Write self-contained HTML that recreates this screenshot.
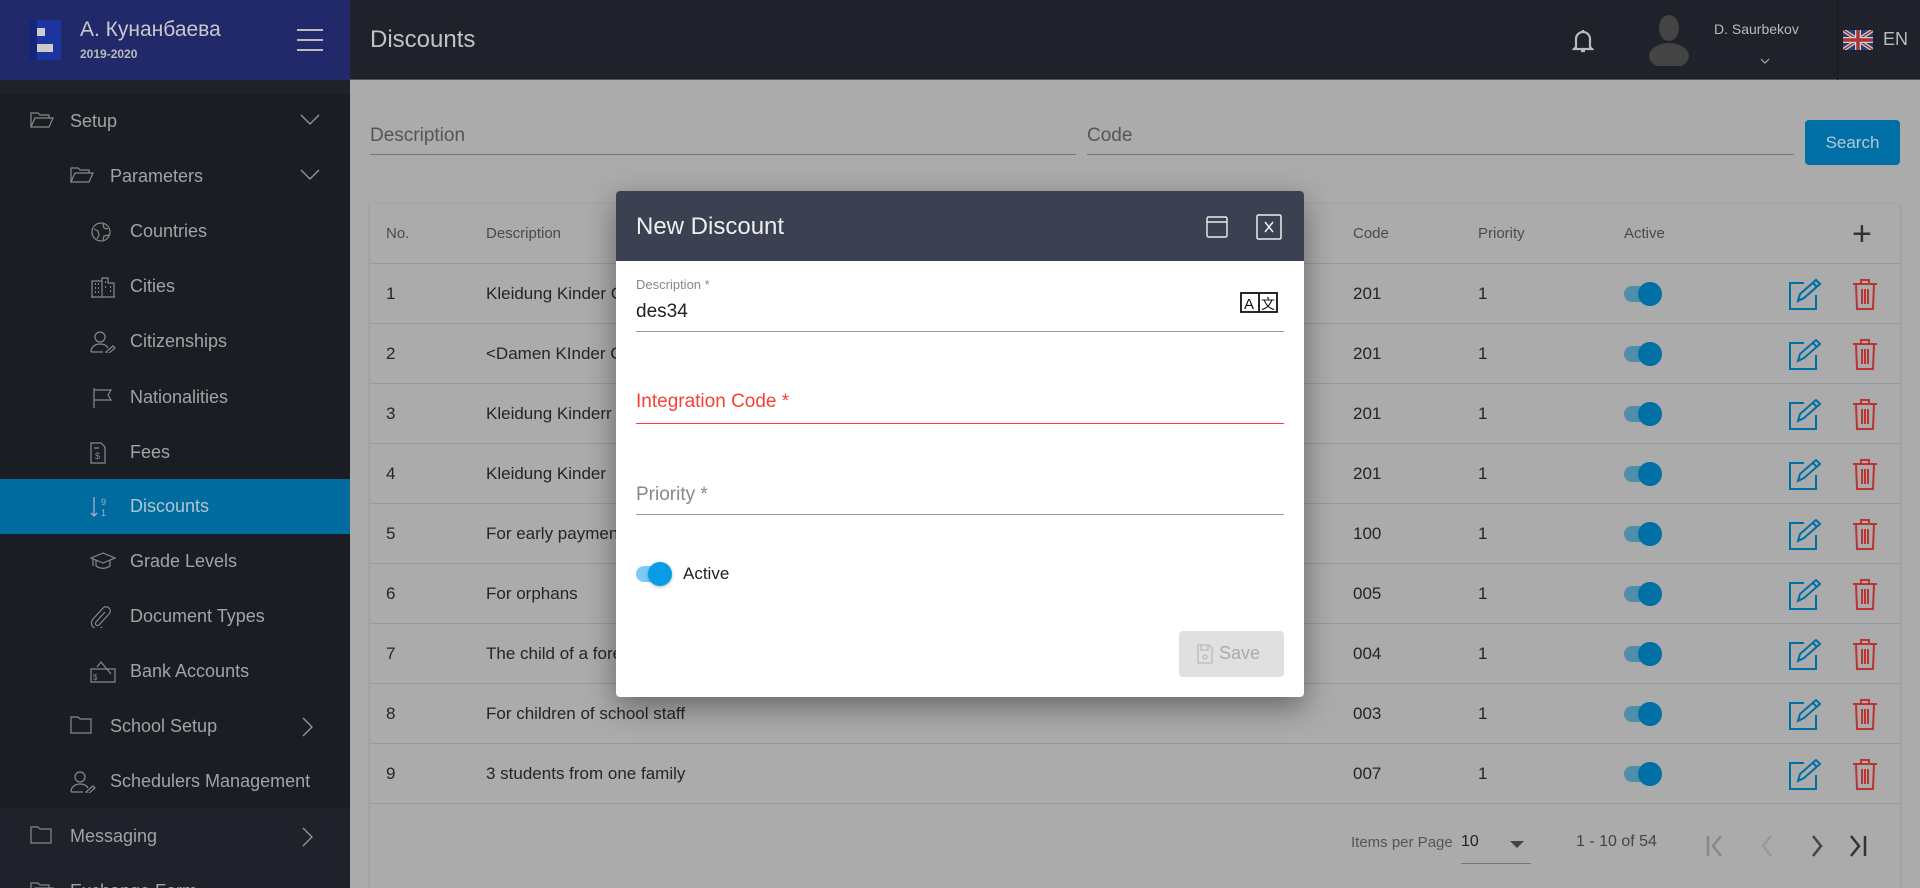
<!DOCTYPE html>
<html><head><meta charset="utf-8"><style>
*{box-sizing:border-box;margin:0;padding:0}
html{width:1920px;height:888px;overflow:hidden}
body{width:1920px;height:888px;overflow:hidden;font-family:"Liberation Sans",sans-serif;background:#ababab;position:relative}
.abs{position:absolute}
#side{left:0;top:0;width:350px;height:888px;background:#1f212b;overflow:hidden}
#brand{left:0;top:0;width:350px;height:80px;background:#21296a}
#nest{left:0;top:94px;width:350px;height:714px;background:#1b1d24}
.it{position:absolute;left:0;width:350px;height:55px;color:#a3a3a3;font-size:18px;line-height:55px}
.it svg{position:absolute;top:17px}
.it svg.ch{left:300px;top:20px}
#top{left:350px;top:0;width:1570px;height:80px;background:#1f212b;border-bottom:1px solid #555}
.card{left:370px;top:204px;width:1530px;height:684px;background:#ababab;box-shadow:0 1px 3px rgba(0,0,0,.2)}
.row{position:absolute;left:0;width:1530px;height:60px;border-bottom:1px solid #999;font-size:17px;color:#252525;line-height:60px}
.row span,.hd span{position:absolute}
.hd{position:absolute;left:0;top:0;width:1530px;height:60px;border-bottom:1px solid #999;font-size:15px;color:#4a4a4a;line-height:60px}
.tg{position:absolute;top:22px;left:1254px;width:34px;height:16px;border-radius:8px;background:#4f8dab}
.tg:after{content:"";position:absolute;left:14px;top:-4px;width:24px;height:24px;border-radius:50%;background:#006fa6}
#modal{left:616px;top:191px;width:688px;height:506px;background:#fff;border-radius:4px;box-shadow:0 10px 30px rgba(0,0,0,.4);overflow:hidden}
</style></head><body>
<div id="side" class="abs">
 <div id="brand" class="abs">
  <div class="abs" style="left:29px;top:20px;width:32px;height:40px;background:#1b34a0"></div>
  <div class="abs" style="left:29px;top:20px;width:8px;height:40px;background:#15257a"></div>
  <div class="abs" style="left:37px;top:28px;width:8px;height:8px;background:#ccc"></div>
  <div class="abs" style="left:37px;top:44px;width:16px;height:8px;background:#ccc"></div>
  <div class="abs" style="left:80px;top:18px;color:#c9c9c9;font-size:21px">А. Кунанбаева</div>
  <div class="abs" style="left:80px;top:47px;color:#bbb;font-size:12px;font-weight:bold">2019-2020</div>
  <div class="abs" style="left:297px;top:29px;width:26px;height:2px;background:#bbb;box-shadow:0 10px 0 #bbb,0 20px 0 #bbb"></div>
 </div>
 <div id="nest" class="abs"></div>
 <div class="it" style="top:94px"><svg style="left:30px" width="24" height="18" viewBox="0 0 24 18" fill="none" stroke="#888" stroke-width="1.2"><path d="M1 16V2h7l2 2h9v3M1 16l4-9h18l-4 9z"/></svg><span style="position:absolute;left:70px">Setup</span><svg class="ch" width="20" height="12" viewBox="0 0 20 12" fill="none" stroke="#999" stroke-width="1.3"><path d="M1 1l9 9 9-9"/></svg></div>
 <div class="it" style="top:149px"><svg style="left:70px" width="24" height="18" viewBox="0 0 24 18" fill="none" stroke="#888" stroke-width="1.2"><path d="M1 16V2h7l2 2h9v3M1 16l4-9h18l-4 9z"/></svg><span style="position:absolute;left:110px">Parameters</span><svg class="ch" width="20" height="12" viewBox="0 0 20 12" fill="none" stroke="#999" stroke-width="1.3"><path d="M1 1l9 9 9-9"/></svg></div>
 <div class="it" style="top:204px"><svg style="left:90px" width="22" height="22" viewBox="0 0 22 22" fill="none" stroke="#888" stroke-width="1.2"><circle cx="11" cy="11" r="9"/><path d="M4 8l4 2 1 4-2 4M13 3l1 4 4 1M13 19l1-4 5-1"/></svg><span style="position:absolute;left:130px">Countries</span></div>
 <div class="it" style="top:259px"><svg style="left:90px" width="26" height="22" viewBox="0 0 26 22" fill="none" stroke="#888" stroke-width="1.2"><path d="M1 21h24M2 21V5h10v16M12 21V2h6v5h6v14"/><path d="M5 8h1M8 8h1M5 12h1M8 12h1M5 16h1M8 16h1M15 6h1M15 11h1M20 11h1M20 15h1" stroke-width="2"/></svg><span style="position:absolute;left:130px">Cities</span></div>
 <div class="it" style="top:314px"><svg style="left:90px" width="26" height="22" viewBox="0 0 26 22" fill="none" stroke="#888" stroke-width="1.2"><circle cx="10" cy="6" r="5"/><path d="M1 21c0-5 4-8 9-8s7 2 8 4M1 21h12M16 21l7-6 2 2-7 6z"/></svg><span style="position:absolute;left:130px">Citizenships</span></div>
 <div class="it" style="top:370px"><svg style="left:92px" width="22" height="22" viewBox="0 0 22 22" fill="none" stroke="#888" stroke-width="1.2"><path d="M2 1v20M2 3h17l-3 5 3 5H2"/></svg><span style="position:absolute;left:130px">Nationalities</span></div>
 <div class="it" style="top:425px"><svg style="left:90px" width="16" height="22" viewBox="0 0 16 22" fill="none" stroke="#888" stroke-width="1.2"><path d="M1 1h10l4 4v16H1zM4 6h5"/><text x="5" y="17" font-size="9" fill="#888" stroke="none" font-family="Liberation Sans">$</text></svg><span style="position:absolute;left:130px">Fees</span></div>
 <div class="it" style="top:479px;background:#006b9e;color:#b0c5d3"><svg style="left:90px" width="20" height="22" viewBox="0 0 20 22" fill="none" stroke="#aac" stroke-width="1.3"><path d="M4 1v19M1 17l3 3 3-3"/><text x="11" y="9" font-size="9" fill="#aac" stroke="none">9</text><text x="11" y="20" font-size="9" fill="#aac" stroke="none">1</text></svg><span style="position:absolute;left:130px">Discounts</span></div>
 <div class="it" style="top:534px"><svg style="left:90px" width="26" height="20" viewBox="0 0 26 20" fill="none" stroke="#888" stroke-width="1.2"><path d="M1 7l12-5 12 5-12 5zM6 9v6c4 3 10 3 14 0V9M3 8v7"/></svg><span style="position:absolute;left:130px">Grade Levels</span></div>
 <div class="it" style="top:589px"><svg style="left:90px" width="22" height="22" viewBox="0 0 22 22" fill="none" stroke="#888" stroke-width="1.2"><path d="M15 6l-9 10a2 2 0 0 0 3 3l10-11a4 4 0 0 0-6-6L3 13a6 6 0 0 0 9 8"/></svg><span style="position:absolute;left:130px">Document Types</span></div>
 <div class="it" style="top:644px"><svg style="left:90px" width="26" height="22" viewBox="0 0 26 22" fill="none" stroke="#888" stroke-width="1.2"><path d="M1 8h24v13H1zM7 6l4-5 10 12"/><text x="3" y="19" font-size="8" fill="#888" stroke="none">$</text></svg><span style="position:absolute;left:130px">Bank Accounts</span></div>
 <div class="it" style="top:699px"><svg style="left:70px" width="22" height="18" viewBox="0 0 22 18" fill="none" stroke="#888" stroke-width="1.2"><path d="M1 1h7l2 2h11v14H1z"/></svg><span style="position:absolute;left:110px">School Setup</span><svg class="ch" style="left:302px;top:18px" width="12" height="20" viewBox="0 0 12 20" fill="none" stroke="#999" stroke-width="1.3"><path d="M1 1l9 9-9 9"/></svg></div>
 <div class="it" style="top:754px"><svg style="left:70px" width="26" height="22" viewBox="0 0 26 22" fill="none" stroke="#888" stroke-width="1.2"><circle cx="10" cy="6" r="5"/><path d="M1 21c0-5 4-8 9-8s7 2 8 4M1 21h12M16 21l7-6 2 2-7 6z"/></svg><span style="position:absolute;left:110px">Schedulers Management</span></div>
 <div class="it" style="top:809px"><svg style="left:30px" width="22" height="18" viewBox="0 0 22 18" fill="none" stroke="#888" stroke-width="1.2"><path d="M1 1h7l2 2h11v14H1z"/></svg><span style="position:absolute;left:70px">Messaging</span><svg class="ch" style="left:302px;top:18px" width="12" height="20" viewBox="0 0 12 20" fill="none" stroke="#999" stroke-width="1.3"><path d="M1 1l9 9-9 9"/></svg></div>
 <div class="it" style="top:864px"><svg style="left:30px" width="24" height="18" viewBox="0 0 24 18" fill="none" stroke="#888" stroke-width="1.2"><path d="M1 16V2h7l2 2h9v3M1 16l4-9h18l-4 9z"/></svg><span style="position:absolute;left:70px">Exchange Form</span></div>
</div>
<div id="top" class="abs">
 <div class="abs" style="left:20px;top:26px;color:#c3c3c3;font-size:24px">Discounts</div>
 <svg class="abs" style="left:1222px;top:28px" width="22" height="26" viewBox="0 0 22 26" fill="none" stroke="#bbb" stroke-width="2.2"><path d="M4 19V11a7 7 0 0 1 14 0v8l2 2H2zM9 23h4M11 2v2"/></svg>
 <svg class="abs" style="left:1298px;top:14px" width="42" height="52" viewBox="0 0 42 52"><ellipse cx="21" cy="14" rx="10" ry="13" fill="#444"/><ellipse cx="21" cy="42" rx="20" ry="13" fill="#444"/></svg>
 <div class="abs" style="left:1364px;top:21px;color:#bbb;font-size:14px">D. Saurbekov</div>
 <svg class="abs" style="left:1410px;top:58px" width="10" height="6" viewBox="0 0 10 6" fill="none" stroke="#aaa" stroke-width="1.2"><path d="M1 1l4 4 4-4"/></svg>
 <div class="abs" style="left:1487px;top:0;width:1px;height:80px;background:#191a22"></div>
 <svg class="abs" style="left:1493px;top:30px" width="30" height="20" viewBox="0 0 60 40"><rect width="60" height="40" fill="#2b3a7a"/><path d="M0 0L60 40M60 0L0 40" stroke="#ccc" stroke-width="8"/><path d="M0 0L60 40M60 0L0 40" stroke="#a33" stroke-width="3"/><path d="M30 0v40M0 20h60" stroke="#ccc" stroke-width="12"/><path d="M30 0v40M0 20h60" stroke="#a33" stroke-width="7"/></svg>
 <div class="abs" style="left:1533px;top:29px;color:#bbb;font-size:18px">EN</div>
</div>
<div class="abs" style="left:370px;top:125px;color:#555;font-size:19px">Description</div>
<div class="abs" style="left:370px;top:154px;width:706px;height:1px;background:#777"></div>
<div class="abs" style="left:1087px;top:125px;color:#555;font-size:19px">Code</div>
<div class="abs" style="left:1087px;top:154px;width:707px;height:1px;background:#777"></div>
<div class="abs" style="left:1805px;top:120px;width:95px;height:45px;background:#006fa6;border-radius:4px;color:#b5c8d6;font-size:17px;line-height:45px;text-align:center">Search</div>
<div class="abs card">
 <div class="hd"><span style="left:16px">No.</span><span style="left:116px">Description</span><span style="left:983px">Code</span><span style="left:1108px">Priority</span><span style="left:1254px">Active</span><span style="left:1482px;font-size:34px;color:#333;font-weight:300">+</span></div>
 <div class="row" style="top:60px"><span style="left:16px">1</span><span style="left:116px">Kleidung Kinder C</span><span style="left:983px">201</span><span style="left:1108px">1</span><div class="tg"></div></div>
 <div class="row" style="top:120px"><span style="left:16px">2</span><span style="left:116px">&lt;Damen KInder C</span><span style="left:983px">201</span><span style="left:1108px">1</span><div class="tg"></div></div>
 <div class="row" style="top:180px"><span style="left:16px">3</span><span style="left:116px">Kleidung Kinderr</span><span style="left:983px">201</span><span style="left:1108px">1</span><div class="tg"></div></div>
 <div class="row" style="top:240px"><span style="left:16px">4</span><span style="left:116px">Kleidung Kinder</span><span style="left:983px">201</span><span style="left:1108px">1</span><div class="tg"></div></div>
 <div class="row" style="top:300px"><span style="left:16px">5</span><span style="left:116px">For early paymen</span><span style="left:983px">100</span><span style="left:1108px">1</span><div class="tg"></div></div>
 <div class="row" style="top:360px"><span style="left:16px">6</span><span style="left:116px">For orphans</span><span style="left:983px">005</span><span style="left:1108px">1</span><div class="tg"></div></div>
 <div class="row" style="top:420px"><span style="left:16px">7</span><span style="left:116px">The child of a fore</span><span style="left:983px">004</span><span style="left:1108px">1</span><div class="tg"></div></div>
 <div class="row" style="top:480px"><span style="left:16px">8</span><span style="left:116px">For children of school staff</span><span style="left:983px">003</span><span style="left:1108px">1</span><div class="tg"></div></div>
 <div class="row" style="top:540px"><span style="left:16px">9</span><span style="left:116px">3 students from one family</span><span style="left:983px">007</span><span style="left:1108px">1</span><div class="tg"></div></div>
 <div class="abs" style="left:981px;top:630px;font-size:15px;color:#555">Items per Page</div>
 <div class="abs" style="left:1091px;top:629px;font-size:16px;color:#222">10</div>
 <div class="abs" style="left:1140px;top:637px;border:7px solid transparent;border-top:7px solid #444"></div>
 <div class="abs" style="left:1091px;top:659px;width:70px;height:1px;background:#777"></div>
 <div class="abs" style="left:1206px;top:629px;font-size:16px;color:#444">1 - 10 of 54</div>
 <svg class="abs" style="left:1335px;top:630px" width="170" height="24" viewBox="0 0 170 24" fill="none" stroke-width="2.5"><path d="M3 2v20M16 2l-8 10 8 10" stroke="#888"/><path d="M66 2l-8 10 8 10" stroke="#999"/><path d="M108 2l8 10-8 10" stroke="#444"/><path d="M146 2l8 10-8 10M160 2v20" stroke="#333"/></svg>
</div>
<div id="modal" class="abs">
 <div class="abs" style="left:0;top:0;width:688px;height:70px;background:#3c4151"></div>
 <div class="abs" style="left:20px;top:22px;color:#eee;font-size:24px">New Discount</div>
 <svg class="abs" style="left:590px;top:25px" width="22" height="22" viewBox="0 0 22 22" fill="none" stroke="#eee" stroke-width="1.4"><rect x="1" y="1" width="20" height="20" rx="1.5"/><path d="M1 6h20"/></svg>
 <svg class="abs" style="left:640px;top:23px" width="26" height="26" viewBox="0 0 26 26" fill="none" stroke="#eee" stroke-width="1.5"><rect x="1" y="1" width="24" height="24" rx="1.5"/><path d="M9 8l8 10M17 8l-8 10"/></svg>
 <div class="abs" style="left:20px;top:86px;color:#888;font-size:13px">Description *</div>
 <div class="abs" style="left:20px;top:110px;color:#222;font-size:19px">des34</div>
 <svg class="abs" style="left:624px;top:101px" width="38" height="22" viewBox="0 0 38 22" fill="none" stroke="#111" stroke-width="1.8"><rect x="1" y="1" width="36" height="19"/><path d="M19 1v19"/><text x="4" y="17" font-size="15" fill="#111" stroke="none" font-family="Liberation Sans">A</text><text x="21" y="17" font-size="14" fill="#111" stroke="none" font-family="Noto Sans CJK SC">文</text></svg>
 <div class="abs" style="left:20px;top:140px;width:648px;height:1px;background:#999"></div>
 <div class="abs" style="left:20px;top:200px;color:#f44336;font-size:19px">Integration Code *</div>
 <div class="abs" style="left:20px;top:232px;width:648px;height:1px;background:#f44336"></div>
 <div class="abs" style="left:20px;top:293px;color:#888;font-size:19px">Priority *</div>
 <div class="abs" style="left:20px;top:323px;width:648px;height:1px;background:#999"></div>
 <div class="abs" style="left:20px;top:375px;width:34px;height:16px;border-radius:8px;background:#7ccbf4"></div>
 <div class="abs" style="left:32px;top:371px;width:24px;height:24px;border-radius:50%;background:#0a9be6;box-shadow:0 1px 3px rgba(0,0,0,.3)"></div>
 <div class="abs" style="left:67px;top:373px;color:#222;font-size:17px">Active</div>
 <div class="abs" style="left:563px;top:440px;width:105px;height:46px;background:#e0e0e0;border-radius:4px"></div>
 <svg class="abs" style="left:581px;top:453px" width="16" height="20" viewBox="0 0 16 20" fill="none" stroke="#bbb" stroke-width="1.3"><path d="M1 1h11l3 3v15H1zM4 1v5h7V1"/><circle cx="8" cy="13" r="2"/></svg>
 <div class="abs" style="left:603px;top:452px;color:#aaa;font-size:18px">Save</div>
</div>
<svg class="abs" style="left:0;top:0" width="1920" height="888">
 <g fill="none" stroke-width="2">
  <g id="e1" stroke="#006fa6"><path d="M1804 283H1790v26h26V295M1798 301l2-7 16-14 4 4-16 14zM1813 283l4 4"/></g>
 </g>
</svg>
<script>
var h='';for(var i=0;i<9;i++){var t=264+i*60;
h+='<svg class="abs" style="left:1788px;top:'+(t+15)+'px" width="34" height="32" viewBox="0 0 34 32" fill="none" stroke="#006fa6" stroke-width="2"><path d="M16 4H2v26h26V16"/><path d="M10 22l2-7 16-14 4 4-16 14zM25 4l4 4"/></svg>';
h+='<svg class="abs" style="left:1852px;top:'+(t+14)+'px" width="26" height="32" viewBox="0 0 26 32" fill="none" stroke="#b33" stroke-width="2"><path d="M1 6h24M9 6V2h8v4M4 6l1 25h16l1-25M10 11v15M13 11v15M16 11v15"/></svg>';}
document.body.insertAdjacentHTML('beforeend',h);
</script>
</body></html>
